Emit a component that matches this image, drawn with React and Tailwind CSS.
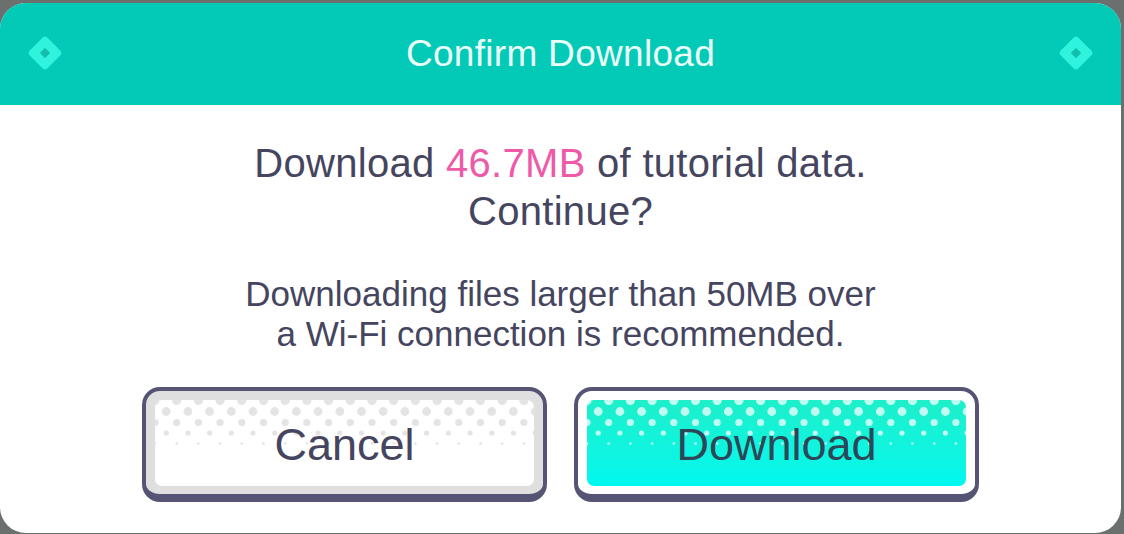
const FONT = { fontFamily: '"Liberation Sans", Arial, sans-serif' };

// halftone rows: [y, radius, shifted]
const ROWS = [
  [0.5, 4.6, false],
  [11.5, 4.4, true],
  [22.5, 3.6, false],
  [33, 2.6, true],
  [43.5, 1.3, false],
];

function Halftone({ fill, opacity = 1 }) {
  const step = 21.7;
  const dots = [];
  ROWS.forEach(([y, r, shifted], ri) => {
    for (let k = 0; k < 19; k++) {
      const x = (shifted ? 11.2 : 0) + k * step;
      dots.push(<circle key={`${ri}-${k}`} cx={x} cy={y} r={r} />);
    }
  });
  return (
    <svg
      className="pointer-events-none absolute left-0 top-0 h-[50px] w-full"
      viewBox="0 0 380 50"
      preserveAspectRatio="xMinYMin slice"
    >
      <g fill={fill} opacity={opacity}>
        {dots}
      </g>
    </svg>
  );
}

function Diamond() {
  return (
    <svg viewBox="0 0 40 40" className="h-10 w-10">
      <rect x="7.5" y="7.5" width="25" height="25" rx="3.5" transform="rotate(45 20 20)" fill="#30f3dd" />
      <rect x="16.3" y="16.3" width="7.4" height="7.4" rx="1" transform="rotate(45 20 20)" fill="#12bfae" />
    </svg>
  );
}

function DialogButton({ label, primary }) {
  return (
    <button
      className={`w-[405px] rounded-[18px] border-[4px] border-b-[8px] border-[#555474] pb-[8px] pl-[9px] pr-[9px] pt-[9px] ${
        primary ? "bg-white" : "bg-[#dfdfe0]"
      }`}
    >
      <div
        className={`relative flex h-[86px] items-center justify-center overflow-hidden rounded-[7px] ${
          primary ? "bg-gradient-to-b from-[#1eefc9] to-[#00f8f0]" : "bg-white"
        }`}
      >
        {primary ? <Halftone fill="#ffffff" opacity={0.72} /> : <Halftone fill="#e4e4e6" />}
        <span
          className={`relative pt-[2px] text-[45px] leading-none ${
            primary ? "text-[#2c4757]" : "text-[#45455f]"
          }`}
        >
          {label}
        </span>
      </div>
    </button>
  );
}

export default function App() {
  return (
    <div className="h-[534px] w-[1124px] overflow-hidden bg-[#6b6f6e] pt-[3px]" style={FONT}>
      <div className="flex h-[530px] w-[1121px] flex-col overflow-hidden rounded-[26px] bg-white">
        {/* header */}
        <div className="flex h-[102px] shrink-0 items-center justify-between bg-[#03c9b7] px-[25px] pb-[2px]">
          <Diamond />
          <h1 className="text-[37px] leading-none tracking-[0.3px] text-[#eafff8]">Confirm Download</h1>
          <Diamond />
        </div>

        {/* body */}
        <div className="flex flex-1 flex-col items-center">
          <p className="mt-[34px] text-center text-[40px] leading-[48px] tracking-[0.3px] text-[#45455f]">
            Download <span className="text-[#ee5aa8]">46.7MB</span> of tutorial data.
            <br />
            Continue?
          </p>
          <p className="mt-[39px] text-center text-[35px] leading-[40px] text-[#45455f]">
            Downloading files larger than 50MB over
            <br />
            a Wi-Fi connection is recommended.
          </p>
          <div className="mt-[33px] flex gap-[27px]">
            <DialogButton label="Cancel" />
            <DialogButton label="Download" primary />
          </div>
        </div>
      </div>
    </div>
  );
}
